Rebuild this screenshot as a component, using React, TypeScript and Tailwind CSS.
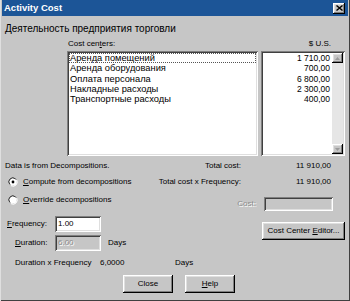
const sunken =
  "shadow-[inset_1px_1px_#808080,inset_-1px_-1px_#ffffff,inset_2px_2px_#404040,inset_-2px_-2px_#dfdfdf]";
const raised =
  "shadow-[inset_-1px_-1px_#000000,inset_1px_1px_#ffffff,inset_-2px_-2px_#808080,inset_2px_2px_#dfdfdf]";

const costCenters = [
  { name: "Аренда помещений", amount: "1 710,00" },
  { name: "Аренда оборудования", amount: "700,00" },
  { name: "Оплата персонала", amount: "6 800,00" },
  { name: "Накладные расходы", amount: "2 300,00" },
  { name: "Транспортные расходы", amount: "400,00" },
];

function Radio({ checked }: { checked: boolean }) {
  return (
    <svg width="10" height="10" viewBox="0 0 10 10" className="shrink-0">
      <path d="M1.5 7 A4 4 0 0 1 7 1.5" fill="none" stroke="#808080" strokeWidth="1" />
      <path d="M7 1.5 A4 4 0 0 1 8.5 3" fill="none" stroke="#808080" strokeWidth="1" />
      <circle cx="5" cy="5" r="3.6" fill="#ffffff" />
      <path d="M2 7.5 A3.6 3.6 0 0 1 7.5 2" fill="none" stroke="#404040" strokeWidth="1" />
      <path d="M8.7 3 A4.2 4.2 0 0 1 3 8.7" fill="none" stroke="#ffffff" strokeWidth="1" />
      {checked && <circle cx="5" cy="5" r="1.4" fill="#000000" />}
    </svg>
  );
}

function Button({ children, className }: { children: React.ReactNode; className: string }) {
  return (
    <div className={`flex items-center justify-center bg-[#c6c6c6] text-black ${raised} ${className}`}>
      {children}
    </div>
  );
}

function ScrollArrow({ up }: { up: boolean }) {
  return (
    <div className={`h-[10px] w-[11px] flex items-center justify-center bg-[#c6c6c6] ${raised}`}>
      <svg width="5" height="3" viewBox="0 0 5 3">
        <path d={up ? "M2.5 0 L5 3 L0 3 Z" : "M0 0 L5 0 L2.5 3 Z"} fill="#9a9a9a" />
      </svg>
    </div>
  );
}

export default function App() {
  return (
    <div className="w-[350px] h-[301px] bg-[#c6c6c6] px-[2px] pb-[2px] flex flex-col font-['Liberation_Sans',Arial,sans-serif] text-[8px] text-black shadow-[inset_1px_0_#dfdfdf,inset_-1px_-1px_#404040]">
      <div className="h-[16px] shrink-0 bg-[#1c5597] flex items-center justify-between pl-[2px] pr-[3px]">
        <span className="text-white font-bold text-[9.5px] leading-none">Activity Cost</span>
        <div className={`w-[12px] h-[11px] bg-[#c6c6c6] flex items-center justify-center ${raised}`}>
          <svg width="7" height="6" viewBox="0 0 7 6">
            <path d="M0.5 0.5 L6.5 5.5 M6.5 0.5 L0.5 5.5" stroke="#000" strokeWidth="1.4" />
          </svg>
        </div>
      </div>

      <div className="flex-1 flex flex-col pl-[3px] pr-[3px]">
        <div className="mt-[7px] h-[12px] leading-[12px] text-[10px]">Деятельность предприятия торговли</div>

        <div className="mt-[4px] h-[10px] leading-[10px] flex">
          <span className="ml-[63px]">
            Cost cen<span className="underline">t</span>ers:
          </span>
          <span className="ml-auto mr-[14px]">$ U.S.</span>
        </div>

        <div className="mt-[2px] flex gap-[3px] ml-[62px]">
          <div className={`w-[191px] h-[105px] bg-white p-[2px] ${sunken}`}>
            {costCenters.map((c, i) => (
              <div
                key={c.name}
                className={`h-[10.3px] leading-[10.3px] pl-[1px] text-[9.3px] ${i === 0 ? "outline outline-1 outline-dotted outline-[#555] -outline-offset-1" : ""}`}
              >
                {c.name}
              </div>
            ))}
          </div>
          <div className={`w-[84px] h-[105px] bg-white p-[2px] flex ${sunken}`}>
            <div className="flex-1 flex flex-col text-right pr-[2px]">
              {costCenters.map((c) => (
                <div key={c.name} className="h-[10.3px] leading-[10.3px] text-[8.5px]">
                  {c.amount}
                </div>
              ))}
            </div>
            <div className="w-[11px] flex flex-col bg-[#e6e6e6]">
              <ScrollArrow up />
              <div className="flex-1" />
              <ScrollArrow up={false} />
            </div>
          </div>
        </div>

        <div className="mt-[4px] h-[12px] leading-[12px] flex">
          <span className="flex-1">Data is from Decompositions.</span>
          <span className="text-right">Total cost:</span>
          <span className="w-[90px] text-right mr-[14px]">11 910,00</span>
        </div>

        <div className="mt-[3px] h-[14px] flex items-center">
          <div className="ml-[3px] flex items-center gap-[5px] flex-1">
            <Radio checked />
            <span>
              <span className="underline">C</span>ompute from decompositions
            </span>
          </div>
          <span className="text-right">Total cost x Frequency:</span>
          <span className="w-[90px] text-right mr-[14px]">11 910,00</span>
        </div>

        <div className="mt-[4px] flex">
          <div className="flex flex-col flex-1">
            <div className="h-[14px] ml-[3px] flex items-center gap-[5px]">
              <Radio checked={false} />
              <span>
                <span className="underline">O</span>verride decompositions
              </span>
            </div>
            <div className="mt-[9px] h-[16px] flex items-center">
              <span className="w-[50px] pl-[2px]">
                <span className="underline">F</span>requency:
              </span>
              <div className={`w-[46px] h-[16px] bg-white pl-[3px] flex items-center ${sunken}`}>1.00</div>
            </div>
            <div className="mt-[3px] h-[16px] flex items-center">
              <span className="w-[50px] pl-[10px]">
                <span className="underline">D</span>uration:
              </span>
              <div className={`w-[46px] h-[16px] bg-[#c6c6c6] pl-[3px] flex items-center text-[#8c8c8c] [text-shadow:1px_1px_#ffffff] ${sunken}`}>
                6.00
              </div>
              <span className="ml-[7px]">Days</span>
            </div>
          </div>
          <div className="flex flex-col items-end w-[104px]">
            <div className="mt-[4px] h-[14px] flex items-center">
              <span className="text-[#8c8c8c] [text-shadow:1px_1px_#ffffff]">Cost:</span>
              <div className={`ml-[8px] mr-[12px] w-[69px] h-[14px] bg-[#c6c6c6] ${sunken}`} />
            </div>
            <Button className="mt-[11px] w-[83px] h-[18px]">
              <span>
                Cost Center <span className="underline">E</span>ditor...
              </span>
            </Button>
          </div>
        </div>

        <div className="mt-[6px] h-[12px] leading-[12px] flex">
          <span className="ml-[10px] w-[85px]">Duration x Frequency</span>
          <span className="w-[75px]">6,0000</span>
          <span>Days</span>
        </div>

        <div className="mt-[6px] flex gap-[12px] ml-[118px]">
          <Button className="w-[50px] h-[18px]">Close</Button>
          <Button className="w-[50px] h-[18px]">
            <span>
              <span className="underline">H</span>elp
            </span>
          </Button>
        </div>
      </div>
    </div>
  );
}
